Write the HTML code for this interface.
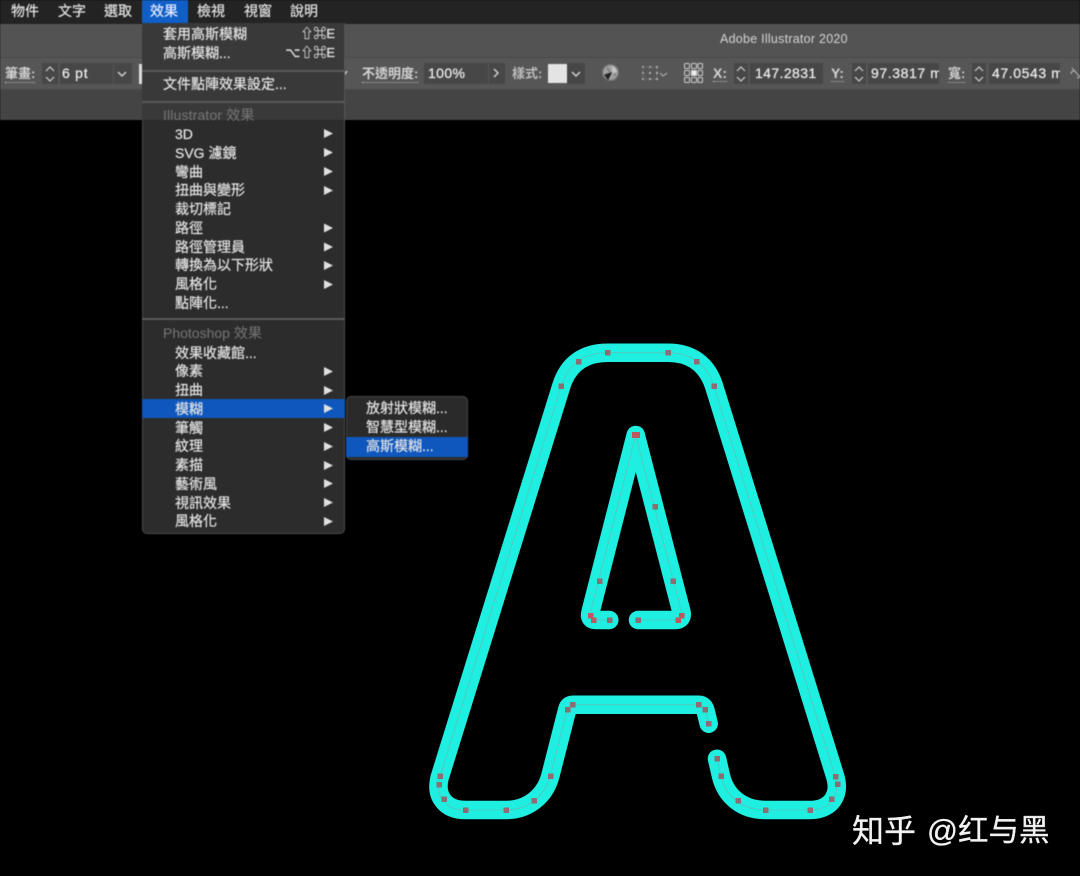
<!DOCTYPE html>
<html><head><meta charset="utf-8">
<style>
html,body{margin:0;padding:0;background:#000;width:1080px;height:876px;overflow:hidden}
body{position:relative;font-family:"Liberation Sans","Noto Sans CJK TC",sans-serif}
div,span{position:absolute;box-sizing:border-box}
.t{font-size:14px;line-height:20px;height:20px;color:#e4e4e4;white-space:nowrap;font-family:"Liberation Sans","Noto Sans CJK TC",sans-serif;-webkit-text-stroke:.2px currentColor}
.g{color:#767676;-webkit-text-stroke:0}
.l{font-size:13px;font-weight:bold;color:#d2d2d2;border-bottom:1px dotted #bbb;line-height:16px;height:17px;white-space:nowrap}
.f{background:#474747;height:21px;top:63px}
.v{font-size:14px;letter-spacing:.4px;line-height:21px;color:#ececec;top:63px;white-space:nowrap;-webkit-text-stroke:.25px currentColor}
.sep{left:142px;width:203px;height:2px;background:#5a5a5a}
#ui{left:0;top:0;width:1080px;height:876px;filter:blur(.4px)}
</style></head><body>
<svg width="1080" height="876" style="position:absolute;left:0;top:0;filter:blur(.35px)">
<g fill="none" stroke-linecap="round" stroke-linejoin="round">
<g stroke="#1eefe0" stroke-width="18.500">
<path d="M708.700 723.700L705.500 710.500Q704 704.700 698.700 704.700L572.700 704.700Q568.500 704.700 567.300 709.300L550.300 776C545 796 528 810 506 810L465.300 810C446 810 435 797 439.500 778L561.300 386C568 364 584 352.700 607.700 352.700L668 352.700C691 352.700 707 364 714 386L835.300 776.700C841 796 830 810 810 810L765.300 810C743 810 726 797 721 776L717 758.700"/>
<path d="M609.300 620L596 620Q588.500 620 590.500 612L635.700 435L681.500 612Q683 620 675 620L638 620"/>
</g>
<g stroke="#8e9c98" stroke-width=".8" opacity=".5">
<path d="M708.700 723.700L705.500 710.500Q704 704.700 698.700 704.700L572.700 704.700Q568.500 704.700 567.300 709.300L550.300 776C545 796 528 810 506 810L465.300 810C446 810 435 797 439.500 778L561.300 386C568 364 584 352.700 607.700 352.700L668 352.700C691 352.700 707 364 714 386L835.300 776.700C841 796 830 810 810 810L765.300 810C743 810 726 797 721 776L717 758.700"/>
<path d="M609.300 620L596 620Q588.500 620 590.500 612L635.700 435L681.500 612Q683 620 675 620L638 620"/>
</g>
</g>
<g fill="#8f6c72">
<rect x="605" y="350" width="5.500" height="5.500"/><rect x="665.500" y="350" width="5.500" height="5.500"/><rect x="694" y="359" width="5.500" height="5.500"/><rect x="711.500" y="383.500" width="5.500" height="5.500"/><rect x="576" y="359" width="5.500" height="5.500"/><rect x="558.500" y="383.500" width="5.500" height="5.500"/>
<rect x="437.500" y="773.500" width="5.500" height="5.500"/><rect x="436.500" y="782" width="5.500" height="5.500"/><rect x="441.500" y="796.500" width="5.500" height="5.500"/><rect x="463" y="807.500" width="5.500" height="5.500"/><rect x="503.500" y="807.500" width="5.500" height="5.500"/><rect x="531.500" y="798" width="5.500" height="5.500"/><rect x="548" y="773.500" width="5.500" height="5.500"/><rect x="565" y="707" width="5.500" height="5.500"/><rect x="570" y="702" width="5.500" height="5.500"/><rect x="696" y="702" width="5.500" height="5.500"/><rect x="702.500" y="707" width="5.500" height="5.500"/><rect x="706" y="721" width="5.500" height="5.500"/>
<rect x="714.500" y="756" width="5.500" height="5.500"/><rect x="718.500" y="773.500" width="5.500" height="5.500"/><rect x="735.500" y="798" width="5.500" height="5.500"/><rect x="763" y="807.500" width="5.500" height="5.500"/><rect x="807.500" y="807.500" width="5.500" height="5.500"/><rect x="829" y="796.500" width="5.500" height="5.500"/><rect x="835" y="781.500" width="5.500" height="5.500"/><rect x="833" y="774" width="5.500" height="5.500"/>
<rect x="632" y="432" width="8" height="6" fill="#c0575f"/><rect x="652.500" y="504" width="5.500" height="5.500"/><rect x="670.500" y="578.500" width="5.500" height="5.500"/><rect x="679" y="613" width="5.500" height="5.500" fill="#c0575f"/><rect x="675.500" y="617.500" width="5.500" height="5.500" fill="#c0575f"/><rect x="635.500" y="617.500" width="5.500" height="5.500"/><rect x="607" y="617.500" width="5.500" height="5.500"/><rect x="591" y="617.500" width="5.500" height="5.500" fill="#c0575f"/><rect x="588" y="613" width="5.500" height="5.500" fill="#c0575f"/><rect x="597" y="578.500" width="5.500" height="5.500"/>
</g>
</svg>

<div id="ui">
<!-- bars -->
<div style="left:0;top:0;width:1080px;height:24px;background:#232323"></div>
<div style="left:0;top:24px;width:1080px;height:33px;background:#535353"></div>
<div style="left:0;top:57px;width:1080px;height:34px;background:#565656;border-top:1px solid #4a4a4a;border-bottom:2px solid #474747"></div>
<div style="left:0;top:91px;width:1080px;height:29px;background:#444"></div>
<div style="left:142px;top:0;width:46px;height:23px;background:#0f5fc6"></div>

<span class="t" style="left:11px;top:1px">物件</span>
<span class="t" style="left:58px;top:1px">文字</span>
<span class="t" style="left:104px;top:1px">選取</span>
<span class="t" style="left:150px;top:1px;color:#eef">效果</span>
<span class="t" style="left:197px;top:1px">檢視</span>
<span class="t" style="left:244px;top:1px">視窗</span>
<span class="t" style="left:290px;top:1px">說明</span>

<span style="left:720px;top:31px;font-size:12.500px;line-height:16px;letter-spacing:.25px;color:#d4d4d4;white-space:nowrap">Adobe Illustrator 2020</span>

<!-- toolbar -->
<span class="l" style="left:5px;top:66px">筆畫:</span>
<div class="f" style="left:42px;width:16px"></div>
<div class="f" style="left:60px;width:53px"></div>
<div class="f" style="left:114px;width:18px"></div>
<span class="v" style="left:62px;letter-spacing:.75px">6 pt</span>
<div style="left:139px;top:64px;width:3px;height:20px;background:#ddd"></div>
<span class="l" style="left:362px;top:66px">不透明度:</span>
<div class="f" style="left:424px;width:64px"></div>
<div class="f" style="left:489px;width:16px"></div>
<span class="v" style="left:428px">100%</span>
<span class="l" style="left:512px;top:66px;border:0;color:#bdbdbd">樣式:</span>
<div class="f" style="left:567px;width:18px"></div>
<div style="left:548px;top:64px;width:19px;height:19px;background:#e4e4e4"></div>
<span class="l" style="left:713px;top:65px;font-size:14px">X:</span>
<div class="f" style="left:734px;width:14px"></div>
<div class="f" style="left:750px;width:73px"></div>
<span class="v" style="left:755px">147.2831</span>
<span class="l" style="left:831px;top:65px;font-size:14px">Y:</span>
<div class="f" style="left:852px;width:14px"></div>
<div class="f" style="left:868px;width:71px;overflow:hidden"><span class="v" style="left:3px;top:0;letter-spacing:.6px">97.3817 m</span></div>
<span class="l" style="left:948px;top:66px">寬:</span>
<div class="f" style="left:972px;width:14px"></div>
<div class="f" style="left:989px;width:71px;overflow:hidden"><span class="v" style="left:3px;top:0;letter-spacing:.6px">47.0543 m</span></div>

<svg width="1080" height="120" style="position:absolute;left:0;top:0" fill="none" stroke="#cfcfcf" stroke-width="1.200">
<path d="M46 71l4-4 4 4M46 77l4 4 4-4M737 71l4-4 4 4M737 77l4 4 4-4M855 71l4-4 4 4M855 77l4 4 4-4M975 71l4-4 4 4M975 77l4 4 4-4"/>
<path d="M118 72l4 4 4-4M572 72l4 4 4-4M347 71l-4 6M494 69l4 4-4 4" stroke-width="1.500"/>
<path d="M660 73l3 3 4-3" stroke="#aaa"/>
<circle cx="610.500" cy="72.500" r="8" fill="#a0a0a0" stroke="#6f6f6f"/>
<path d="M605 75l3 4 3-6z" fill="#222" stroke="#222"/>
<path d="M612 66a7 7 0 0 1 5 6l-5 1z" fill="#c4c4c4" stroke="none"/>
<path d="M607 68l3 4M614 76l2-2" stroke="#707070"/>
<g fill="#b0b0b0" stroke="none"><rect x="642" y="66" width="2" height="2"/><rect x="649" y="66" width="2" height="2"/><rect x="656" y="66" width="2" height="2"/><rect x="642" y="72" width="2" height="2"/><rect x="649" y="72" width="2" height="2"/><rect x="656" y="72" width="2" height="2"/><rect x="642" y="78" width="2" height="2"/><rect x="649" y="78" width="2" height="2"/><rect x="656" y="78" width="2" height="2"/></g>
<rect x="643" y="67" width="14" height="12" stroke="#8a8a8a" stroke-width=".7" stroke-dasharray="1.500 1.500"/>
<g stroke="#cdcdcd" stroke-width="1"><rect x="684.500" y="63.500" width="5" height="5" rx="1"/><rect x="691.500" y="63.500" width="5" height="5" rx="1"/><rect x="698" y="63.500" width="4.500" height="5" rx="1"/><rect x="684.500" y="70.500" width="5" height="5" rx="1"/><rect x="691.500" y="70.500" width="5" height="5" fill="#eee"/><rect x="698" y="70.500" width="4.500" height="5" rx="1"/><rect x="684.500" y="77.500" width="5" height="5" rx="1"/><rect x="691.500" y="77.500" width="5" height="5" rx="1"/><rect x="698" y="77.500" width="4.500" height="5" rx="1"/></g>
<path d="M1072 68l8 9M1071 74q0-3 3-3M1077 78q3 0 3-3" stroke="#aaa"/>
</svg>

<!-- main menu -->
<div style="left:142px;top:23px;width:203px;height:511px;background:#2c2c2c;border:1px solid #4a4a4a;border-top:0;border-radius:0 0 5px 5px"></div>
<div style="left:142px;top:23px;width:203px;height:97px;background:#393939;border-right:1px solid #555"></div>
<div class="sep" style="top:70px"></div>
<div class="sep" style="top:101px"></div>
<div class="sep" style="top:318px"></div>
<div style="left:142px;top:399px;width:203px;height:19px;background:#0f57bd"></div>

<span class="t" style="left:163px;top:24px">套用高斯模糊</span>
<span class="t" style="left:163px;top:43px">高斯模糊...</span>
<span class="t" style="right:745px;top:24px;font-size:13px">⇧⌘E</span>
<span class="t" style="right:745px;top:43px;font-size:13px">⌥⇧⌘E</span>
<span class="t" style="left:163px;top:74px">文件點陣效果設定...</span>
<span class="t g" style="left:163px;top:105px;letter-spacing:.15px">Illustrator 效果</span>
<span class="t" style="left:175px;top:124px">3D</span>
<span class="t" style="left:175px;top:143px">SVG 濾鏡</span>
<span class="t" style="left:175px;top:162px">彎曲</span>
<span class="t" style="left:175px;top:180px">扭曲與變形</span>
<span class="t" style="left:175px;top:199px">裁切標記</span>
<span class="t" style="left:175px;top:218px">路徑</span>
<span class="t" style="left:175px;top:237px">路徑管理員</span>
<span class="t" style="left:175px;top:255px">轉換為以下形狀</span>
<span class="t" style="left:175px;top:274px">風格化</span>
<span class="t" style="left:175px;top:293px">點陣化...</span>
<span class="t g" style="left:163px;top:323px">Photoshop 效果</span>
<span class="t" style="left:175px;top:343px">效果收藏館...</span>
<span class="t" style="left:175px;top:361px">像素</span>
<span class="t" style="left:175px;top:380px">扭曲</span>
<span class="t" style="left:175px;top:399px">模糊</span>
<span class="t" style="left:175px;top:418px">筆觸</span>
<span class="t" style="left:175px;top:436px">紋理</span>
<span class="t" style="left:175px;top:455px">素描</span>
<span class="t" style="left:175px;top:474px">藝術風</span>
<span class="t" style="left:175px;top:493px">視訊效果</span>
<span class="t" style="left:175px;top:511px">風格化</span>

<!-- submenu -->
<div style="left:346px;top:396px;width:122px;height:64px;background:#2a2a2a;border:1px solid #444;border-radius:5px"></div>
<div style="left:346px;top:437px;width:122px;height:20px;background:#0f57bd"></div>
<span class="t" style="left:366px;top:398px">放射狀模糊...</span>
<span class="t" style="left:366px;top:417px">智慧型模糊...</span>
<span class="t" style="left:366px;top:436px">高斯模糊...</span>

<svg width="1080" height="876" style="position:absolute;left:0;top:0" fill="#e0e0e0">
<path d="M324 129v9l9-4.500zM324 148v9l9-4.500zM324 167v9l9-4.500zM324 186v9l9-4.500zM324 223.500v9l9-4.500zM324 242.500v9l9-4.500zM324 261v9l9-4.500zM324 280v9l9-4.500zM324 367v9l9-4.500zM324 386v9l9-4.500zM324 404v9l9-4.500zM324 423v9l9-4.500zM324 442v9l9-4.500zM324 461v9l9-4.500zM324 479v9l9-4.500zM324 498v9l9-4.500zM324 517v9l9-4.500z"/>
</svg>
</div>

<span style="left:852px;top:810px;font-size:32px;line-height:42px;color:#f2f2f2;white-space:nowrap;font-family:'Liberation Sans','Noto Sans CJK SC',sans-serif;-webkit-text-stroke:.3px #f2f2f2">知乎</span>
<span style="left:927px;top:810px;font-size:30.500px;line-height:42px;color:#f2f2f2;white-space:nowrap;font-family:'Liberation Sans','Noto Sans CJK SC',sans-serif;-webkit-text-stroke:.3px #f2f2f2">@红与黑</span>
</body></html>
